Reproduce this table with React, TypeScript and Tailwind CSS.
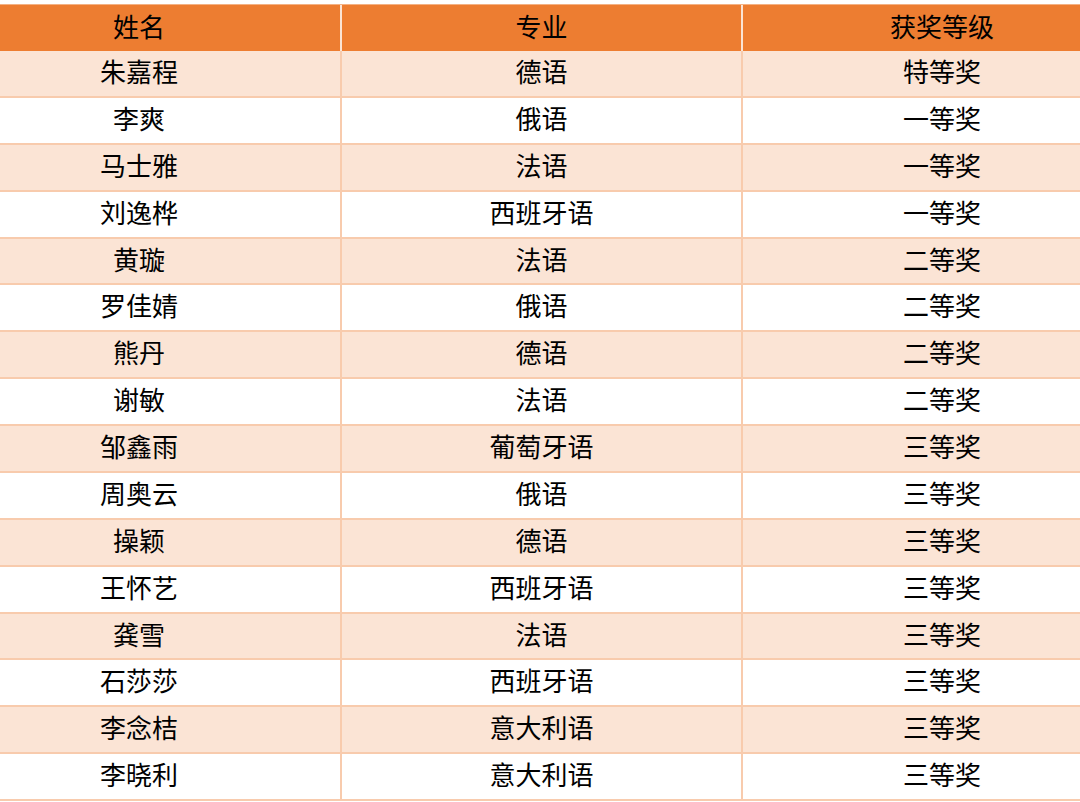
const rows: [string, string, string][] = [
  ["朱嘉程", "德语", "特等奖"],
  ["李爽", "俄语", "一等奖"],
  ["马士雅", "法语", "一等奖"],
  ["刘逸桦", "西班牙语", "一等奖"],
  ["黄璇", "法语", "二等奖"],
  ["罗佳婧", "俄语", "二等奖"],
  ["熊丹", "德语", "二等奖"],
  ["谢敏", "法语", "二等奖"],
  ["邹鑫雨", "葡萄牙语", "三等奖"],
  ["周奥云", "俄语", "三等奖"],
  ["操颖", "德语", "三等奖"],
  ["王怀艺", "西班牙语", "三等奖"],
  ["龚雪", "法语", "三等奖"],
  ["石莎莎", "西班牙语", "三等奖"],
  ["李念桔", "意大利语", "三等奖"],
  ["李晓利", "意大利语", "三等奖"],
];

export default function App() {
  return (
    <div
      className="w-[1080px] h-[802px] overflow-hidden bg-white pt-1 text-[26px] text-black"
      style={{ fontFamily: '"Noto Sans CJK SC", "Noto Sans", sans-serif' }}
    >
      {/* the table is wider than the view: cropped on both sides */}
      <div className="w-[1203px] -ml-[62px] border-t border-[#F4B183]">
        <div className="grid grid-cols-[402px_401px_400px] h-[46px] bg-[#ED7D31]">
          <div className="flex items-center justify-center pb-[6px]">姓名</div>
          <div className="flex items-center justify-center pb-[6px] border-l-2 border-[#FBE4D5]">专业</div>
          <div className="flex items-center justify-center pb-[6px] border-l-2 border-[#FBE4D5]">获奖等级</div>
        </div>
        {rows.map((r, i) => (
          <div
            key={i}
            className={`grid grid-cols-[402px_401px_400px] h-[46.875px] border-b-2 border-[#F8CBAD] ${
              i % 2 === 0 ? "bg-[#FBE4D5]" : "bg-white"
            }`}
          >
            <div className="flex items-center justify-center pb-[6px]">{r[0]}</div>
            <div className="flex items-center justify-center pb-[6px] border-l-2 border-[#F8CBAD]">{r[1]}</div>
            <div className="flex items-center justify-center pb-[6px] border-l-2 border-[#F8CBAD]">{r[2]}</div>
          </div>
        ))}
      </div>
    </div>
  );
}
